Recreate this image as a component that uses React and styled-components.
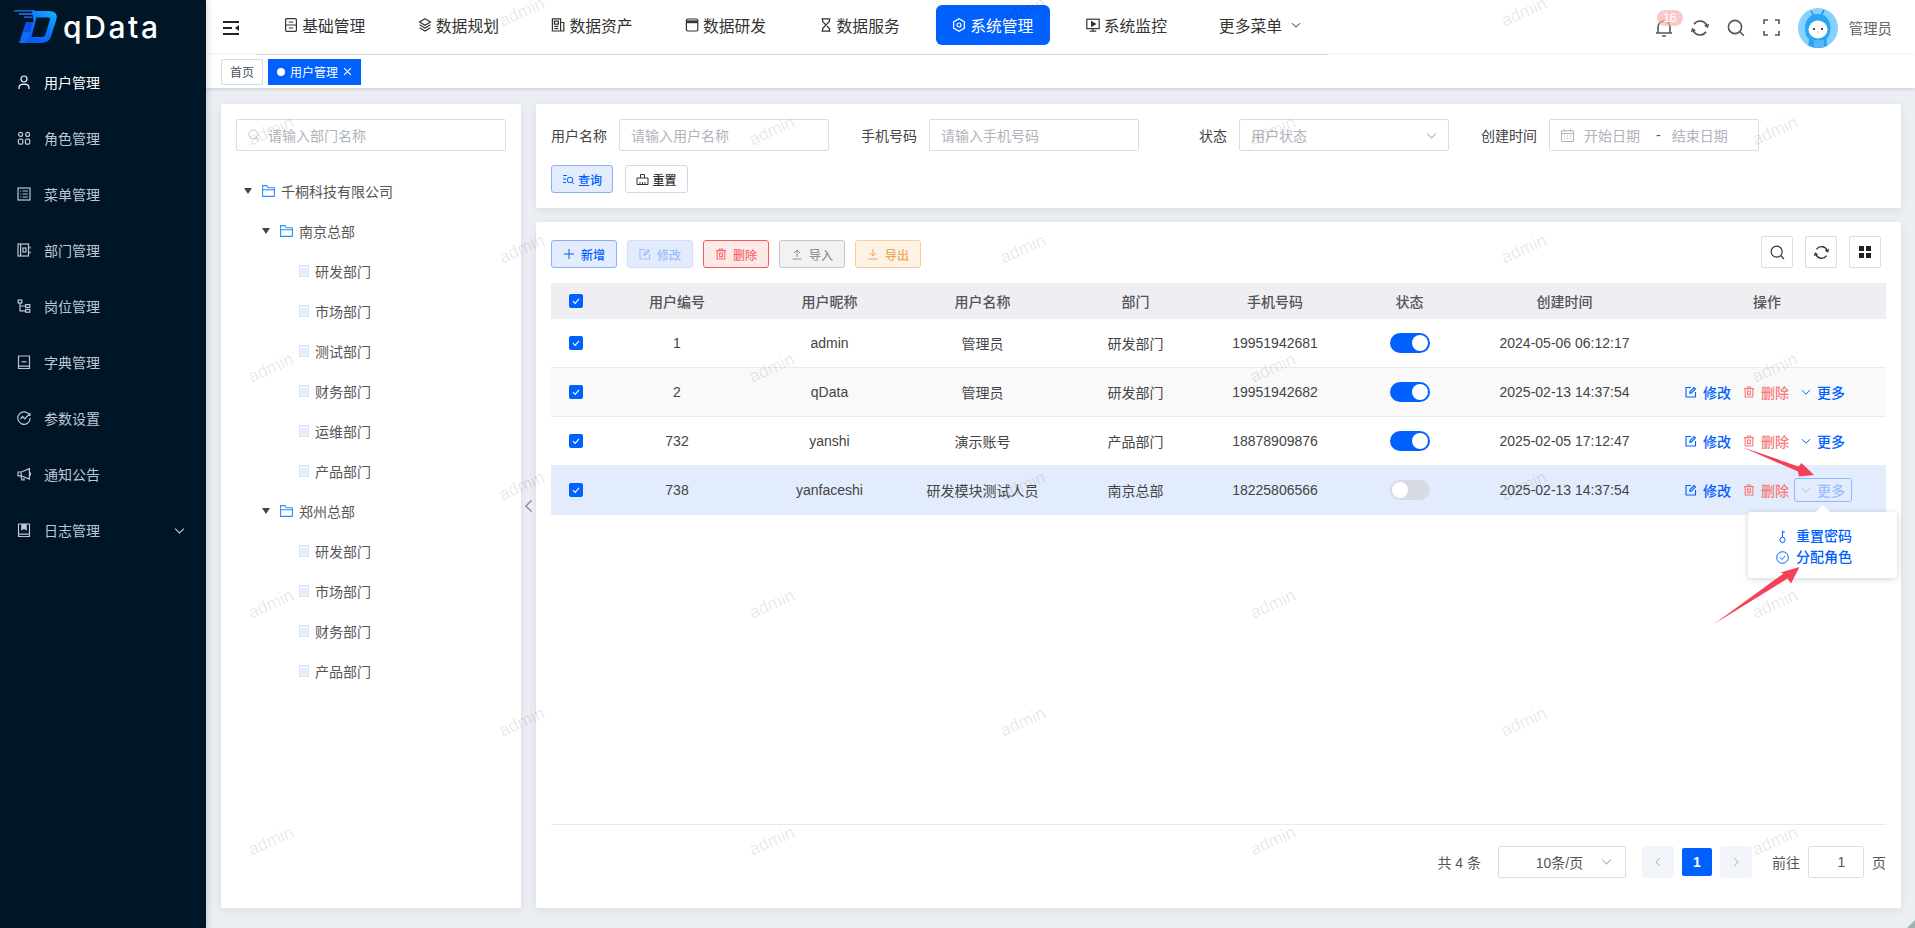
import React from 'react';
import styled, { createGlobalStyle } from 'styled-components';

const BLUE = '#0061ff';
const COLS = '50px 152px 153px 153px 153px 126px 143px 167px 238px';

const GlobalStyle = createGlobalStyle`
  html, body {
    margin: 0;
    padding: 0;
    height: 100%;
    overflow: hidden;
    font-family: 'Liberation Sans', 'Noto Sans CJK SC', sans-serif;
    color: #444;
  }
  * { box-sizing: border-box; }
`;

const Shell = styled.div`
  position: relative;
  display: flex;
  width: 1915px;
  height: 928px;
  overflow: hidden;
  background: #ebeef2;
`;

const Sidebar = styled.aside`
  position: relative;
  z-index: 10;
  flex: 0 0 206px;
  background: #001526;
  box-shadow: 2px 0 6px rgba(0, 21, 41, 0.15);
`;

const Brand = styled.div`
  display: flex;
  align-items: flex-start;
  height: 54px;
  padding: 10px 0 0 13px;
`;

const BrandName = styled.span`
  margin: -2px 0 0 5px;
  font-family: Inter, sans-serif;
  font-size: 30px;
  line-height: 38px;
  font-weight: 500;
  letter-spacing: 2.6px;
  color: #fff;
`;

const SideItem = styled.div`
  display: flex;
  align-items: center;
  gap: 13px;
  height: 56px;
  padding: 0 21px 0 17px;
  font-size: 14px;
  color: ${(p) => (p.$active ? '#fff' : '#bfc8d2')};
  svg { flex: none; }
`;

const SideChevron = styled.span`
  display: flex;
  margin-left: auto;
`;

const Main = styled.main`
  display: flex;
  flex: 1;
  flex-direction: column;
  min-width: 0;
`;

const Header = styled.header`
  display: flex;
  align-items: stretch;
  height: 55px;
  padding-left: 17px;
  background: #fff;
`;

const Burger = styled.div`
  display: flex;
  align-items: center;
  flex: 0 0 33px;
`;

const Nav = styled.nav`
  display: flex;
  gap: 20px;
  flex: 0 0 1072px;
  padding: 5px 0 0 12px;
  border-bottom: 1px solid #dcdfe6;
`;

const NavItem = styled.div`
  display: flex;
  align-items: center;
  justify-content: center;
  gap: ${(p) => p.$gap || 4}px;
  width: 113.6px;
  height: 40px;
  border-radius: 6px;
  font-size: 15.8px;
  white-space: nowrap;
  color: ${(p) => (p.$active ? '#fff' : '#333')};
  background: ${(p) => (p.$active ? BLUE : 'transparent')};
`;

const HeaderRight = styled.div`
  display: flex;
  align-items: center;
  margin-left: auto;
  padding: 0 23px 0 0;
`;

const ToolIcon = styled.div`
  position: relative;
  display: flex;
  align-items: center;
  justify-content: center;
  width: 36px;
  height: 40px;
  color: #555;
`;

const Badge = styled.span`
  position: absolute;
  top: 2px;
  left: 11px;
  width: 26px;
  height: 16px;
  border-radius: 8px;
  background: rgba(250, 170, 170, 0.65);
  color: #fff;
  font-size: 12px;
  line-height: 16px;
  text-align: center;
`;

const Avatar = styled.div`
  display: flex;
  flex: 0 0 40px;
  height: 40px;
  margin-left: 8px;
  border-radius: 50%;
  overflow: hidden;
`;

const UserName = styled.span`
  margin-left: 11px;
  font-size: 14.4px;
  color: #666;
`;

const TagBar = styled.div`
  position: relative;
  display: flex;
  align-items: center;
  gap: 5px;
  height: 33px;
  padding: 0 15px;
  background: #fff;
  box-shadow: 0 1px 4px rgba(0, 21, 41, 0.16);
`;

const Tag = styled.div`
  display: flex;
  align-items: center;
  justify-content: center;
  gap: 5px;
  height: 26px;
  padding: 0 8px;
  border: 1px solid ${(p) => (p.$active ? BLUE : '#d8dce5')};
  background: ${(p) => (p.$active ? BLUE : '#fff')};
  color: ${(p) => (p.$active ? '#fff' : '#495060')};
  font-size: 12px;
`;

const TagDot = styled.span`
  width: 8px;
  height: 8px;
  border-radius: 50%;
  background: #fff;
`;

const Content = styled.div`
  display: flex;
  flex: 1;
  min-height: 0;
  padding: 16px 14px 20px 15px;
`;

const Card = styled.section`
  background: #fff;
  border-radius: 2px;
  box-shadow: 0 2px 8px rgba(0, 21, 41, 0.08);
`;

const TreeCard = styled(Card)`
  flex: 0 0 300px;
  padding: 15px;
`;

const Gutter = styled.div`
  display: flex;
  align-items: center;
  justify-content: center;
  flex: 0 0 15px;
  color: #8a8f99;
`;

const RightCol = styled.div`
  display: flex;
  flex: 1;
  flex-direction: column;
  gap: 14px;
  min-width: 0;
`;

const Field = styled.div`
  position: relative;
  display: flex;
  align-items: center;
  gap: ${(p) => p.$gap || 8}px;
  width: ${(p) => p.$w || 210}px;
  height: 32px;
  padding: 0 ${(p) => p.$pad ?? 11}px;
  border: 1px solid #dcdce4;
  border-radius: 2px;
  background: #fff;
  font-size: 14px;
  white-space: nowrap;
  color: #b0b3ba;
`;

const Caret = styled.span`
  display: flex;
  margin-left: auto;
  color: #b4b7bd;
`;

const DateDash = styled.span`
  margin: 0 1px 0 6px;
  color: #555;
`;

const Tree = styled.div`
  margin-top: 20px;
`;

const TreeRow = styled.div`
  display: flex;
  align-items: center;
  height: 40px;
  padding-left: ${(p) => p.$indent}px;
  font-size: 14px;
  color: #555;
`;

const TreeArrow = styled.span`
  flex: none;
  width: 0;
  height: 0;
  margin-right: 10px;
  border-left: 4.5px solid transparent;
  border-right: 4.5px solid transparent;
  border-top: 6px solid #444;
`;

const TreeLabel = styled.span`
  margin-left: 6px;
`;

const QueryCard = styled(Card)`
  flex: 0 0 104px;
  padding: 15px;
`;

const QueryRow = styled.div`
  display: flex;
  gap: 32px;
`;

const QueryItem = styled.label`
  display: flex;
  align-items: center;
`;

const QueryLabel = styled.span`
  width: 68px;
  padding-right: 12px;
  font-size: 14px;
  color: #444;
  text-align: right;
`;

const ButtonRow = styled.div`
  display: flex;
  gap: ${(p) => p.$gap}px;
  margin: ${(p) => p.$top || 0}px ${(p) => p.$right || 0}px 0 0;
`;

const tones = {
  primary: ['#e3ecfc', '#8ab0f8', BLUE],
  disabled: ['#e3ecfc', '#cfdffb', '#9dbdf8'],
  danger: ['#fee9e9', '#f25a5a', '#f56c6c'],
  gray: ['#f2f2f3', '#c4c5c9', '#909399'],
  warn: ['#fdf2e4', '#f6cf9c', '#f0a654'],
  plain: ['#fff', '#d6d6e2', '#333'],
};

const Btn = styled.button`
  display: flex;
  align-items: center;
  justify-content: center;
  gap: ${(p) => p.$gap || 6}px;
  width: ${(p) => p.$w}px;
  height: 28px;
  padding: 0;
  border-radius: 3px;
  border: 1px solid ${(p) => tones[p.$tone][1]};
  background: ${(p) => tones[p.$tone][0]};
  color: ${(p) => tones[p.$tone][2]};
  font-family: inherit;
  font-size: 12px;
  font-weight: 500;
`;

const TableCard = styled(Card)`
  display: flex;
  flex: 1;
  flex-direction: column;
  min-height: 0;
  padding: 14px 15px 31px;
`;

const Toolbar = styled.div`
  display: flex;
  align-items: flex-end;
  justify-content: space-between;
  height: 32px;
  margin-bottom: 15px;
`;

const SquareBtn = styled.div`
  display: flex;
  align-items: center;
  justify-content: center;
  width: 32px;
  height: 32px;
  border: 1px solid #dcdce4;
  border-radius: 2px;
  color: #333;
`;

const Table = styled.div`
  flex: 1;
  min-height: 0;
`;

const HeadRow = styled.div`
  display: grid;
  grid-template-columns: ${COLS};
  height: 36px;
  background: #eeeef3;
  font-size: 14px;
  font-weight: 500;
  color: #555;
`;

const Row = styled.div`
  display: grid;
  grid-template-columns: ${COLS};
  height: 49px;
  border-bottom: 1px solid ${(p) => (p.$hl ? '#e2ecfc' : '#e8ecf2')};
  background: ${(p) => (p.$hl ? '#e2ecfc' : p.$striped ? '#f9f9fa' : '#fff')};
  font-size: 14px;
  color: #444;
`;

const Cell = styled.div`
  display: flex;
  align-items: center;
  justify-content: center;
  min-width: 0;
  white-space: nowrap;
`;

const Check = styled.span`
  display: flex;
  align-items: center;
  justify-content: center;
  width: 14px;
  height: 14px;
  border-radius: 2px;
  background: ${BLUE};
`;

const Switch = styled.span`
  display: flex;
  align-items: center;
  justify-content: ${(p) => (p.$on ? 'flex-end' : 'flex-start')};
  width: 40px;
  height: 20px;
  padding: 2px;
  border-radius: 10px;
  background: ${(p) => (p.$on ? BLUE : '#d6dae2')};
`;

const Knob = styled.span`
  width: 16px;
  height: 16px;
  border-radius: 50%;
  background: #fff;
`;

const OpsCell = styled(Cell)`
  padding-right: 4px;
`;

const OpWrap = styled.div`
  position: relative;
`;

const Op = styled.span`
  display: flex;
  align-items: center;
  gap: 6px;
  width: 58px;
  height: 24px;
  padding-left: 6px;
  border: 1.5px solid ${(p) => (p.$focus ? '#8fb7ff' : 'transparent')};
  border-radius: 3px;
  color: ${(p) => (p.$focus ? '#9cbcff' : p.$danger ? '#f77a7a' : BLUE)};
  font-size: 14px;
  font-weight: 500;
`;

const Popover = styled.div`
  position: absolute;
  top: 34px;
  left: -46px;
  z-index: 4;
  display: flex;
  flex-direction: column;
  gap: 3px;
  width: 149px;
  height: 66px;
  padding: 15px 0 0 28px;
  background: #fff;
  border-radius: 3px;
  box-shadow: 0 1px 6px rgba(0, 0, 0, 0.18);
  &::before {
    content: '';
    position: absolute;
    top: -5px;
    left: 70px;
    width: 10px;
    height: 10px;
    background: #fff;
    transform: rotate(45deg);
  }
`;

const PopItem = styled.div`
  display: flex;
  align-items: center;
  gap: 7px;
  height: 18px;
  font-size: 14px;
  font-weight: 500;
  line-height: 18px;
  color: ${BLUE};
`;

const Pager = styled.div`
  display: flex;
  align-items: center;
  height: 53px;
  padding-top: 21px;
  border-top: 1px solid #e6e8ee;
  font-size: 14px;
  color: #555;
`;

const PageTotal = styled.span`
  margin-left: auto;
  margin-right: 17px;
`;

const PageBtn = styled.span`
  display: flex;
  align-items: center;
  justify-content: center;
  width: ${(p) => p.$w}px;
  height: ${(p) => (p.$active ? 28 : 32)}px;
  margin-left: ${(p) => p.$left}px;
  border-radius: 2px;
  background: ${(p) => (p.$active ? BLUE : '#f2f5f9')};
  color: ${(p) => (p.$active ? '#fff' : '#a8abb2')};
  font-weight: ${(p) => (p.$active ? 700 : 400)};
`;

const PageText = styled.span`
  margin: 0 ${(p) => p.$right}px 0 ${(p) => p.$left}px;
`;

const PageSize = styled(Field)`
  justify-content: center;
  padding-right: ${(p) => p.$shift || 0}px;
  color: #555;
`;

const SizeCaret = styled(Caret)`
  position: absolute;
  right: 13px;
`;

const Watermark = styled.span`
  position: absolute;
  z-index: 5;
  font-size: 17.5px;
  color: rgba(0, 0, 0, 0.1);
  pointer-events: none;
  transform: translate(-50%, -50%) rotate(-24deg);
`;

const Annotations = styled.svg`
  position: absolute;
  top: 0;
  left: 0;
  z-index: 6;
  pointer-events: none;
`;

// icons, all stroke based so they follow the text colour
const Ico = ({ s = 14, w = 1.2, children, vb = 14 }) => (
  <svg width={s} height={s} viewBox={`0 0 ${vb} ${vb}`} fill="none" stroke="currentColor" strokeWidth={w}>
    {children}
  </svg>
);

const sideIcons = {
  user: <><circle cx="7" cy="4" r="3" /><path d="M2 14v-1.2c0-2.2 2-3.6 5-3.6s5 1.4 5 3.6V14" /></>,
  role: <><circle cx="3.6" cy="3.4" r="2" /><circle cx="10.6" cy="3.4" r="2" /><rect x="1.4" y="8.2" width="4.4" height="5" rx="1.4" /><rect x="8.4" y="8.2" width="4.4" height="5" rx="1.4" /></>,
  menu: <><rect x="1" y="1" width="12" height="12" /><path d="M3.2 4h1M3.2 7h1M3.2 10h1M5.6 4h5.2M5.6 7h5.2M5.6 10h5.2" /></>,
  dept: <><rect x="1" y="1" width="10.5" height="12" /><path d="M3.6 1v12" /><rect x="6" y="5" width="3" height="4" /><path d="M13 3.5v2M13 8.500v2" /></>,
  post: <><rect x="1.2" y="1" width="3.6" height="3" /><rect x="8.6" y="5.6" width="4.2" height="2.8" /><rect x="8.6" y="10.4" width="4.2" height="2.8" /><path d="M3 4v7.8h5.6M3 7h5.6" /></>,
  dict: <><path d="M1.5 11.2V1h11v10.2zM1.5 11.2v2.3h11v-2.3" /><path d="M4.5 6.8h5" /></>,
  param: <><path d="M12.6 4.4A6.2 6.2 0 1 0 13.2 7" /><path d="M3.4 8l2.2-2.6 2.2 2.4 3-3.200" /><path d="M13 1.8v2.6h-2.4" /></>,
  notice: <><path d="M1 5h3.2L12.4 1.6v10.4L4.2 8.8H1zM4.2 5v3.8M4 9l.8 4h2.4l-.7-3.4" /><path d="M13.4 5.4v3" /></>,
  log: <><path d="M1.5 11.2V1h11v10.2zM1.5 11.2v2.3h11v-2.3" /><path d="M4.8 1v5.6L7 5.2l2.2 1.4V1" fill="currentColor" /></>,
};

const navIcons = {
  base: <><rect x="1.600" y=".7" width="10.800" height="12.600" rx="1" /><path d="M1.600 7h10.800M4.800 4h4.400M4.800 10h4.400" /></>,
  plan: <><path d="M7 .8l5.400 3.200L7 7.200 1.600 4z" /><path d="M1.600 6.800L7 10l5.400-3.200M1.600 9.800L7 13l5.400-3.200" /></>,
  asset: <><path d="M1.400 .8h8.200v12.200H1.400zM9.600 4.500h3.200v8.500H1.400" /><path d="M3.400 3.200h4v3h-4zM3.400 8.400h4M3.400 10.600h4" /></>,
  dev: <><rect x="1.400" y="1" width="11.400" height="12" rx="1.400" /><path d="M1.400 3.800h11.400" strokeWidth="2.800" /></>,
  service: <path d="M2.500 .8h9M2.500 13.200h9M3.600 .8v2.600l6.800 7.200v2.600M10.400 .8v2.600l-6.800 7.200v2.600" />,
  system: <><path d="M7 .8l5.400 3.100v6.200L7 13.200l-5.400-3.100V3.900z" /><circle cx="7" cy="7" r="2" /></>,
  monitor: <><rect x=".8" y="1.200" width="12.400" height="9.400" /><path d="M7 10.600v2.600M3.800 13.200h6.400" /><path d="M5.600 3.800L9.400 6 5.600 8.200z" fill="currentColor" /></>,
};

const Chevron = ({ s = 10, dir = 'down', w = 1 }) => {
  const d = { down: 'M1 3.2l4 4 4-4', left: 'M6.8 1L2.8 5l4 4', right: 'M3.2 1l4 4-4 4' }[dir];
  return <Ico s={s} vb={10} w={w}><path d={d} /></Ico>;
};

const RefreshIcon = ({ s = 18 }) => (
  <Ico s={s} vb={18} w={1.6}>
    <path d="M3 5.200A7.200 7.200 0 0 1 16 7.500M15 12.800A7.200 7.200 0 0 1 2 10.500" />
    <path d="M13.800 6.200l2.600 1.800 1-3M4.200 11.800L1.600 10l-1 3" />
  </Ico>
);

const SearchIcon = ({ s = 18, w = 1.6 }) => (
  <Ico s={s} vb={18} w={w}>
    <circle cx="8" cy="8" r="6.6" />
    <path d="M12.800 12.800l4 4" />
  </Ico>
);

const EditIcon = () => (
  <Ico s={12} vb={12} w={1.1}>
    <path d="M6 1.500H1v9.500h9.500V6" />
    <path d="M4.800 7.200l.3-1.600 4-4 1.300 1.300-4 4z" />
  </Ico>
);

const TrashIcon = () => (
  <Ico s={12} vb={12} w={1.1}>
    <path d="M1 2.600h10M4.400 2.600V1h3.200v1.600M2.200 2.600V11h7.600V2.600" />
    <path d="M4.600 5h2.800v3.600H4.600z" />
  </Ico>
);

const TickMark = () => (
  <svg width="10" height="10" viewBox="0 0 10 10" fill="none" stroke="#fff" strokeWidth="1.1">
    <path d="M2 5.200l2.200 2.200 3.800-4.600" />
  </svg>
);

const FolderIcon = () => (
  <svg width="13" height="12" viewBox="0 0 13 12" fill="none" stroke="#2e90fa" strokeWidth="1.1">
    <path d="M.6 11.400V.6h4.400l1 2.200h6.400v8.600z" />
    <path d="M.6 4.800h11.800" />
  </svg>
);

const DocIcon = () => (
  <svg width="10" height="12" viewBox="0 0 10 12" fill="#eef5fe" stroke="#cfe2fb" strokeWidth="1">
    <rect x=".5" y=".5" width="9" height="11" />
    <path d="M2.600 4h4.800M2.600 6h4.800M2.600 8h4.800" />
  </svg>
);

const Logo = () => (
  <svg width="45" height="34" viewBox="0 0 45 34" fill="none">
    <defs>
      <linearGradient id="logoFill" x1="0" y1="1" x2="1" y2="0">
        <stop offset="0" stopColor="#0550ee" />
        <stop offset="0.55" stopColor="#0a74ff" />
        <stop offset="1" stopColor="#12b8ff" />
      </linearGradient>
    </defs>
    <path d="M19 1H36Q45 1 43.500 9L38.500 25Q36.500 33 28 33H6L13 12H20.500z" fill="url(#logoFill)" />
    <path d="M23.500 7.500H35Q37.500 7.500 36.800 10L32.500 24Q31.700 27 29 27H18.500z" fill="#001526" />
    <path d="M13 12H20L14 33H6z" fill="#0a4fe6" />
    <path d="M10 22h7l-3 11H7z" fill="#1c7bff" opacity="0.6" />
    <path d="M1 .8h21M6 4h14M11 7.200h8" stroke="#1f7bff" strokeWidth="1.300" />
  </svg>
);

const Mascot = () => (
  <svg width="40" height="40" viewBox="0 0 40 40">
    <rect width="40" height="40" fill="#86d2ff" />
    <path d="M13 3l3 5M26 2l-3 6" stroke="#1684e8" strokeWidth="1.400" fill="none" />
    <path d="M20 6c8 0 12.500 6 12.500 14 0 6-2 9-4 11l1 9H10l1-9c-3-2-4-6-4-11C7 12 12 6 20 6z" fill="#2aa4f4" />
    <ellipse cx="20" cy="21.500" rx="9.500" ry="9" fill="#fff" />
    <circle cx="16" cy="21" r="1.100" fill="#223" />
    <circle cx="24" cy="21" r="1.100" fill="#223" />
    <path d="M19.600 24h1" stroke="#e66" strokeWidth="1" />
    <rect x="16" y="32" width="10" height="8" fill="#57b8f5" />
  </svg>
);

const navItems = [
  ['基础管理', 'base'],
  ['数据规划', 'plan'],
  ['数据资产', 'asset'],
  ['数据研发', 'dev'],
  ['数据服务', 'service'],
  ['系统管理', 'system'],
  ['系统监控', 'monitor'],
];

const sideItems = [
  ['用户管理', 'user'],
  ['角色管理', 'role'],
  ['菜单管理', 'menu'],
  ['部门管理', 'dept'],
  ['岗位管理', 'post'],
  ['字典管理', 'dict'],
  ['参数设置', 'param'],
  ['通知公告', 'notice'],
  ['日志管理', 'log'],
];

const tree = [
  [0, '千桐科技有限公司'],
  [1, '南京总部'],
  [2, '研发部门'],
  [2, '市场部门'],
  [2, '测试部门'],
  [2, '财务部门'],
  [2, '运维部门'],
  [2, '产品部门'],
  [1, '郑州总部'],
  [2, '研发部门'],
  [2, '市场部门'],
  [2, '财务部门'],
  [2, '产品部门'],
];

const users = [
  ['1', 'admin', '管理员', '研发部门', '19951942681', true, '2024-05-06 06:12:17'],
  ['2', 'qData', '管理员', '研发部门', '19951942682', true, '2025-02-13 14:37:54'],
  ['732', 'yanshi', '演示账号', '产品部门', '18878909876', true, '2025-02-05 17:12:47'],
  ['738', 'yanfaceshi', '研发模块测试人员', '南京总部', '18225806566', false, '2025-02-13 14:37:54'],
];

const heads = ['用户编号', '用户昵称', '用户名称', '部门', '手机号码', '状态', '创建时间', '操作'];

const marks = [];
[12, 131, 249, 368, 486, 604, 722, 841].forEach((y, i) => {
  (i % 2 ? [271, 772, 1273, 1775] : [522, 1023, 1524]).forEach((x) => marks.push([x, y]));
});

const App = () => (
  <Shell>
    <GlobalStyle />
    <Sidebar>
      <Brand>
        <Logo />
        <BrandName>qData</BrandName>
      </Brand>
      {sideItems.map(([label, icon], i) => (
        <SideItem key={label} $active={i === 0}>
          <Ico>{sideIcons[icon]}</Ico>
          {label}
          {icon === 'log' && <SideChevron><Chevron s={11} /></SideChevron>}
        </SideItem>
      ))}
    </Sidebar>

    <Main>
      <Header>
        <Burger>
          <svg width="16" height="14" viewBox="0 0 16 14" fill="none" stroke="#222" strokeWidth="1.8">
            <path d="M0 1h16M0 7h9M0 13h16" />
            <path d="M16 4l-4 3 4 3z" fill="#222" stroke="none" />
          </svg>
        </Burger>
        <Nav>
          {navItems.map(([label, icon]) => (
            <NavItem key={label} $active={icon === 'system'}>
              <Ico>{navIcons[icon]}</Ico>
              {label}
            </NavItem>
          ))}
          <NavItem $gap={9}>
            更多菜单
            <Chevron s={10} />
          </NavItem>
        </Nav>
        <HeaderRight>
          <ToolIcon>
            <Ico s={18} vb={18} w={1.6}>
              <path d="M3 14V8a6 6 0 0 1 12 0v6M1 14h16M7 17h4" />
            </Ico>
            <Badge>16</Badge>
          </ToolIcon>
          <ToolIcon><RefreshIcon /></ToolIcon>
          <ToolIcon><SearchIcon /></ToolIcon>
          <ToolIcon>
            <Ico s={17} vb={17} w={1.6}>
              <path d="M1 5V1h4M12 1h4v4M16 12v4h-4M5 16H1v-4" />
            </Ico>
          </ToolIcon>
          <Avatar><Mascot /></Avatar>
          <UserName>管理员</UserName>
        </HeaderRight>
      </Header>

      <TagBar>
        <Tag>首页</Tag>
        <Tag $active>
          <TagDot />
          用户管理
          <svg width="9" height="9" viewBox="0 0 8 8" stroke="#fff" strokeWidth="1">
            <path d="M1 1l6 6M7 1L1 7" />
          </svg>
        </Tag>
      </TagBar>

      <Content>
        <TreeCard>
          <Field $w={270}>
            <SearchIcon s={12} w={1.1} />
            <span>请输入部门名称</span>
          </Field>
          <Tree>
            {tree.map(([depth, label], i) => (
              <TreeRow key={i} $indent={[8, 26, 63][depth]}>
                {depth < 2 ? <TreeArrow /> : <DocIcon />}
                {depth < 2 && <FolderIcon />}
                <TreeLabel>{label}</TreeLabel>
              </TreeRow>
            ))}
          </Tree>
        </TreeCard>

        <Gutter><Chevron s={14} dir="left" /></Gutter>

        <RightCol>
          <QueryCard>
            <QueryRow>
              <QueryItem>
                <QueryLabel>用户名称</QueryLabel>
                <Field>请输入用户名称</Field>
              </QueryItem>
              <QueryItem>
                <QueryLabel>手机号码</QueryLabel>
                <Field>请输入手机号码</Field>
              </QueryItem>
              <QueryItem>
                <QueryLabel>状态</QueryLabel>
                <Field>
                  用户状态
                  <Caret><Chevron s={11} /></Caret>
                </Field>
              </QueryItem>
              <QueryItem>
                <QueryLabel>创建时间</QueryLabel>
                <Field $gap={10}>
                  <Ico s={13} vb={13} w={1}>
                    <path d="M.5 1.800h12v10.700H.5zM.5 4.600h12M3.500.3v2.500M9.500.3v2.500M3 7h1M6 7h1M9 7h1M3 9.500h1M6 9.500h1M9 9.500h1" />
                  </Ico>
                  <span>开始日期</span>
                  <DateDash>-</DateDash>
                  <span>结束日期</span>
                </Field>
              </QueryItem>
            </QueryRow>
            <ButtonRow $gap={12} $top={14}>
              <Btn $w={62} $tone="primary" $gap={3}>
                <Ico s={13} vb={13} w={1}>
                  <path d="M1 2.500h4M1 6h3M1 9.500h3" />
                  <circle cx="8" cy="7" r="2.800" />
                  <path d="M10 9l2 2" />
                </Ico>
                查询
              </Btn>
              <Btn $w={63} $tone="plain" $gap={3}>
                <Ico s={13} vb={13} w={1}>
                  <path d="M4.500 5V1.500h4V5M1 5h11v6.500H1zM4 11.500V9M6.500 11.500V9M9 11.500V9" />
                </Ico>
                重置
              </Btn>
            </ButtonRow>
          </QueryCard>

          <TableCard>
            <Toolbar>
              <ButtonRow $gap={10}>
                <Btn $w={66} $tone="primary">
                  <Ico s={12} vb={12} w={1}><path d="M6 1v10M1 6h10" /></Ico>
                  新增
                </Btn>
                <Btn $w={66} $tone="disabled"><EditIcon />修改</Btn>
                <Btn $w={66} $tone="danger"><TrashIcon />删除</Btn>
                <Btn $w={66} $tone="gray">
                  <Ico s={12} vb={12} w={1}><path d="M6 9V2M3 5l3-3 3 3M1.500 11h9" /></Ico>
                  导入
                </Btn>
                <Btn $w={66} $tone="warn">
                  <Ico s={12} vb={12} w={1}><path d="M6 1v7M3 5l3 3 3-3M1.500 11h9" /></Ico>
                  导出
                </Btn>
              </ButtonRow>
              <ButtonRow $gap={12} $right={5}>
                <SquareBtn><SearchIcon s={15} w={1.4} /></SquareBtn>
                <SquareBtn><RefreshIcon s={15} /></SquareBtn>
                <SquareBtn>
                  <svg width="12" height="12" viewBox="0 0 12 12" fill="#222">
                    <rect width="5" height="5" /><rect x="7" width="5" height="5" />
                    <rect y="7" width="5" height="5" /><rect x="7" y="7" width="5" height="5" />
                  </svg>
                </SquareBtn>
              </ButtonRow>
            </Toolbar>

            <Table>
              <HeadRow>
                <Cell><Check><TickMark /></Check></Cell>
                {heads.map((h) => <Cell key={h}>{h}</Cell>)}
              </HeadRow>
              {users.map((u, i) => (
                <Row key={u[0]} $striped={i === 1} $hl={i === 3}>
                  <Cell><Check><TickMark /></Check></Cell>
                  <Cell>{u[0]}</Cell>
                  <Cell>{u[1]}</Cell>
                  <Cell>{u[2]}</Cell>
                  <Cell>{u[3]}</Cell>
                  <Cell>{u[4]}</Cell>
                  <Cell><Switch $on={u[5]}><Knob /></Switch></Cell>
                  <Cell>{u[6]}</Cell>
                  <OpsCell>
                    {i > 0 && <Op><EditIcon />修改</Op>}
                    {i > 0 && <Op $danger><TrashIcon />删除</Op>}
                    {i > 0 && (
                      <OpWrap>
                        <Op $focus={i === 3}><Chevron s={10} />更多</Op>
                        {i === 3 && (
                          <Popover>
                            <PopItem>
                              <Ico s={13} vb={13} w={1}>
                                <circle cx="6.500" cy="9.800" r="2.600" />
                                <path d="M6.500 7.200V.6M6.500 2.200h2.400" />
                              </Ico>
                              重置密码
                            </PopItem>
                            <PopItem>
                              <Ico s={13} vb={13} w={1}>
                                <circle cx="6.500" cy="6.500" r="5.800" />
                                <path d="M4 6.500l2 2 3.200-3.600" />
                              </Ico>
                              分配角色
                            </PopItem>
                          </Popover>
                        )}
                      </OpWrap>
                    )}
                  </OpsCell>
                </Row>
              ))}
            </Table>

            <Pager>
              <PageTotal>共 4 条</PageTotal>
              <PageSize $w={128} $shift={16}>
                <span>10条/页</span>
                <SizeCaret><Chevron s={11} /></SizeCaret>
              </PageSize>
              <PageBtn $w={32} $left={16}><Chevron s={10} dir="left" /></PageBtn>
              <PageBtn $w={30} $left={8} $active>1</PageBtn>
              <PageBtn $w={32} $left={8}><Chevron s={10} dir="right" /></PageBtn>
              <PageText $left={20} $right={8}>前往</PageText>
              <PageSize $w={56}>1</PageSize>
              <PageText $left={8} $right={0}>页</PageText>
            </Pager>
          </TableCard>
        </RightCol>
      </Content>
    </Main>

    {marks.map(([x, y]) => (
      <Watermark key={`${x}-${y}`} style={{ left: x, top: y }}>admin</Watermark>
    ))}

    <Annotations width="1915" height="928" viewBox="0 0 1915 928">
      <polygon points="1742,447 1798.500,466.500 1801.500,463 1814,475 1799,476.500 1798,471.500" fill="#f5405a" />
      <polygon points="1714,624 1783.500,573.500 1780.500,572.500 1799.500,567 1791,583.500 1787.500,578.500" fill="#f5405a" />
      <polygon points="1915,920 1915,928 1907,928" fill="#9fb2b4" />
    </Annotations>
  </Shell>
);

export default App;
